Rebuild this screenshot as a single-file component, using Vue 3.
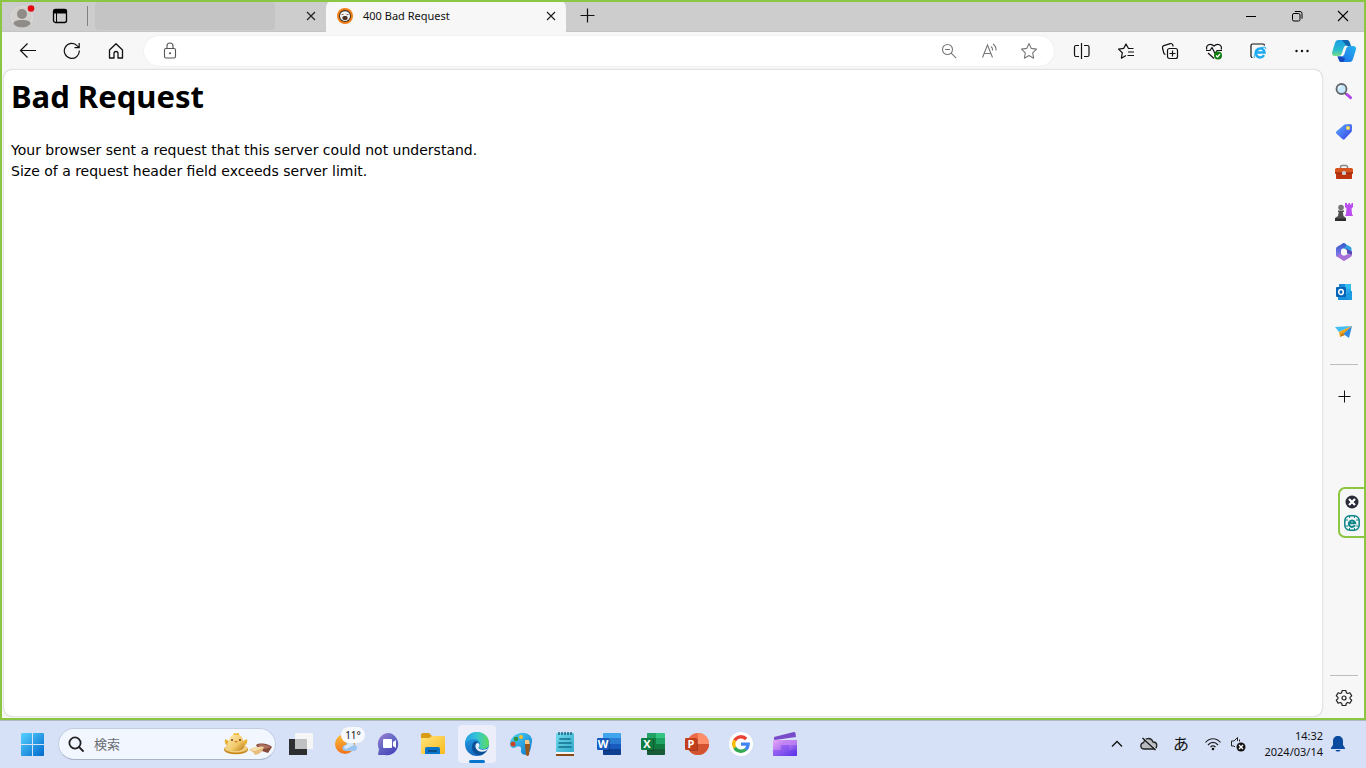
<script setup>
import { ref } from 'vue'

const address = ref('')
const query = ref('')
const apps = [
  { name: 'Word', letter: 'W', kind: 'word', c: ['#41a5ee', '#2b7cd3', '#185abd', '#103f91'], tile: '#185abd' },
  { name: 'Excel', letter: 'X', kind: 'excel', c: ['#33c481', '#21a366', '#107c41', '#185c37'], tile: '#107c41' }
]
</script>

<template>
  <div class="desktop">
    <section class="window" aria-label="Browser">
      <header class="titlebar">
        <button class="profile" aria-label="Profile">
          <svg width="26" height="26" viewBox="0 0 26 26">
            <circle cx="13" cy="14" r="10.5" fill="#d2d0cd" stroke="#dedbd6" />
            <circle cx="13" cy="11" r="5" fill="#8f8b87" />
            <path d="M4.500 21c0-3 3-4 8.500-4s8.500 1 8.500 4c-2.500 2.500-5 3.500-8.500 3.500S7 23.500 4.500 21z" fill="#8f8b87" />
            <circle cx="22" cy="5.500" r="3.300" fill="#e50914" />
          </svg>
        </button>
        <button class="workspaces" aria-label="Tab actions">
          <svg width="16" height="16" viewBox="0 0 16 16" fill="none" stroke="#000">
            <rect x="1.500" y="1.500" width="13" height="13" rx="2" stroke-width="1.300" />
            <path d="M1.500 3.500h13" stroke-width="4" />
            <path d="M4.500 4v10.500" />
          </svg>
        </button>
        <span class="tab-divider"></span>
        <div class="tab idle-tab">
          <button class="tab-label blank" aria-label="Background tab"></button>
          <button class="close" aria-label="Close background tab">
            <svg width="10" height="10" viewBox="0 0 10 10"><path d="M1 1l8 8M9 1L1 9" stroke="#222" stroke-width="1.200" /></svg>
          </button>
        </div>
        <div class="tab active-tab">
          <button class="tab-label">
            <svg width="16" height="16" viewBox="0 0 16 16">
              <circle cx="8" cy="8" r="8" fill="#f07d15" />
              <circle cx="8" cy="8" r="6" fill="#38312d" />
              <path d="M3 7.500C3.500 4.500 5.500 3.200 8 3.200s4.500 1.300 5 4.300c.2 3-2 5.500-5 5.500s-5.200-2.500-5-5.500z" fill="#f4f2f0" />
              <path d="M4.500 6.500h2M9.500 6.500h2" stroke="#777" />
              <path d="M5.500 9c.8-1.200 4.200-1.200 5 0v2c-.8 1.500-4.200 1.500-5 0z" fill="#4a3024" />
            </svg>
            <span>400 Bad Request</span>
          </button>
          <button class="close" aria-label="Close tab">
            <svg width="10" height="10" viewBox="0 0 10 10"><path d="M1 1l8 8M9 1L1 9" stroke="#222" stroke-width="1.200" /></svg>
          </button>
        </div>
        <button class="new-tab" aria-label="New tab">
          <svg width="15" height="15" viewBox="0 0 15 15"><path d="M7.500 0.500v14M.5 7.500h14" stroke="#111" stroke-width="1.200" /></svg>
        </button>
        <div class="window-controls">
          <button aria-label="Minimize"><svg width="12" height="12" viewBox="0 0 12 12"><path d="M1 6.500h10" stroke="#000" /></svg></button>
          <button aria-label="Restore">
            <svg width="12" height="12" viewBox="0 0 12 12" fill="none" stroke="#000">
              <rect x="1.500" y="3.500" width="7.500" height="7.500" rx="1.500" /><path d="M3.800 1.500H9a2 2 0 0 1 2 2v5.200" />
            </svg>
          </button>
          <button aria-label="Close"><svg width="12" height="12" viewBox="0 0 12 12"><path d="M1 1l10 10M11 1L1 11" stroke="#000" stroke-width="1.100" /></svg></button>
        </div>
      </header>

      <nav class="toolbar" aria-label="Browser toolbar">
        <div class="group">
          <button aria-label="Back">
            <svg width="18" height="18" viewBox="0 0 18 18" fill="none" stroke="#111" stroke-width="1.200"><path d="M17 8.500H1.500M8.500 1.500l-7 7 7 7" /></svg>
          </button>
          <button aria-label="Refresh">
            <svg width="18" height="18" viewBox="0 0 18 18" fill="none" stroke="#111" stroke-width="1.200"><path d="M16.300 8.500a7.500 7.500 0 1 1-2-4.700l1.800 1.800M16.200 1v4.700h-4.700" /></svg>
          </button>
          <button aria-label="Home">
            <svg width="18" height="18" viewBox="0 0 18 18" fill="none" stroke="#111" stroke-width="1.300" stroke-linejoin="round"><path d="M2.500 8L9 1.800 15.500 8v8H11v-4.500a2 2 0 0 0-4 0V16H2.500z" /></svg>
          </button>
        </div>
        <div class="address">
          <button class="lock" aria-label="Site information">
            <svg width="16" height="18" viewBox="0 0 16 18" fill="none" stroke="#555" stroke-width="1.100">
              <rect x="2.500" y="6.500" width="11" height="9.500" rx="1.500" /><path d="M5 6.500V4a3 3 0 0 1 6 0v2.500" /><circle cx="8" cy="11.300" r="1" fill="#444" stroke="none" />
            </svg>
          </button>
          <input v-model="address" type="text" aria-label="Address" />
          <button aria-label="Zoom">
            <svg width="18" height="18" viewBox="0 0 18 18" fill="none" stroke="#777" stroke-width="1.100"><circle cx="7.500" cy="7.500" r="5" /><path d="M11.200 11.200l5 5M5 7.500h5" /></svg>
          </button>
          <button aria-label="Read aloud">
            <svg width="18" height="18" viewBox="0 0 18 18" fill="none" stroke="#777" stroke-width="1.100"><path d="M2.500 15.500L7.500 3l5 12.500M4.300 11.500h6.400M11 4.500a4 4 0 0 1 1.500 4M13 2a7 7 0 0 1 3 6.500" /></svg>
          </button>
          <button aria-label="Add to favorites">
            <svg width="18" height="18" viewBox="0 0 18 18" fill="none" stroke="#777" stroke-width="1.100" stroke-linejoin="round"><path d="M9 1.500l2.300 4.900 5.200.7-3.800 3.700.9 5.400L9 13.600l-4.600 2.600.9-5.400-3.800-3.700 5.200-.7z" /></svg>
          </button>
        </div>
        <div class="group">
          <button aria-label="Split screen">
            <svg width="18" height="18" viewBox="0 0 18 18" fill="none" stroke="#111" stroke-width="1.200"><path d="M8.500 1v16M6 3.500H3a1.500 1.500 0 0 0-1.500 1.500v8a1.500 1.500 0 0 0 1.500 1.500h3M11 3.500h3.500A1.500 1.500 0 0 1 16 5v8a1.500 1.500 0 0 1-1.500 1.500H11" /></svg>
          </button>
          <button aria-label="Favorites">
            <svg width="18" height="18" viewBox="0 0 18 18" fill="none" stroke="#111" stroke-width="1.200" stroke-linejoin="round"><path d="M16.500 6.500h-5L9 2 6.700 6.400l-5.200.7 3.800 3.700-.9 5.400L9 13.500M11 10h6M10.500 13.500H17" /></svg>
          </button>
          <button aria-label="Collections">
            <svg width="18" height="18" viewBox="0 0 18 18" fill="none" stroke="#111" stroke-width="1.200"><rect x="6.500" y="6.500" width="10" height="10" rx="2" /><path d="M11.500 8.500v6M8.500 11.500h6M4.500 12.500a2 2 0 0 1-1.700-1.500L1.500 6a2 2 0 0 1 1.300-2.400l6.500-2a2 2 0 0 1 2.400 1.200l.5 1.700" /></svg>
          </button>
          <button aria-label="Browser essentials">
            <svg width="18" height="18" viewBox="0 0 18 18" fill="none" stroke="#111" stroke-width="1.200" stroke-linejoin="round"><path d="M1.800 7.500C.5 3 5.500.5 9 4c3.500-3.500 8.500-1 7.200 3.500M1 8.500h4l2-3 3 6 2-3h5M3 11l6 5.500" /><circle cx="13" cy="13.500" r="4" fill="#107c10" stroke="none" /><path d="M11 13.500l1.500 1.500 2.500-3" stroke="#fff" /></svg>
          </button>
          <button aria-label="Internet Explorer mode">
            <svg width="18" height="18" viewBox="0 0 18 18" fill="none"><path d="M3.500 15.500A1.500 1.500 0 0 1 2 14V3.500A1.500 1.500 0 0 1 3.500 2H14a1.500 1.500 0 0 1 1.500 1.500" stroke="#111" stroke-width="1.200" /><path d="M15 13.200a4.500 4.500 0 1 1 .6-2.700H7" stroke="#1eaaf1" stroke-width="2.400" /><path d="M5.500 16c-2-2 4-10.500 9.500-11 1.500 0 2 .8 1.400 2" stroke="#1eaaf1" /></svg>
          </button>
          <button aria-label="Settings and more">
            <svg width="18" height="18" viewBox="0 0 18 18" fill="#111"><circle cx="3.500" cy="9" r="1.200" /><circle cx="9" cy="9" r="1.200" /><circle cx="14.500" cy="9" r="1.200" /></svg>
          </button>
        </div>
        <button class="copilot" aria-label="Copilot">
          <svg width="24" height="24" viewBox="0 0 24 24">
            <defs>
              <linearGradient id="cpa" x1="0" y1="0" x2="0" y2="1"><stop stop-color="#1b9de5" /><stop offset=".6" stop-color="#28b9d0" /><stop offset="1" stop-color="#75de89" /></linearGradient>
              <linearGradient id="cpb" x1="0" y1="1" x2="1" y2="0"><stop stop-color="#1a6ae8" /><stop offset="1" stop-color="#28b3f0" /></linearGradient>
            </defs>
            <path d="M6.500 1H16l2.500 5.500H15c-2 0-3 1-3.600 3L10 14c-.6 2-1.800 3-3.500 3H3c-2.500 0-3.500-1.500-2.800-4L3 4c.5-2 1.500-3 3.500-3z" fill="url(#cpa)" />
            <path d="M17.500 23H8l-2.500-5.500H9c2 0 3-1 3.600-3L14 10c.6-2 1.800-3 3.500-3H21c2.500 0 3.500 1.500 2.800 4L21 20c-.5 2-1.500 3-3.500 3z" fill="url(#cpb)" />
            <path d="M10 1h4.500c2 0 3 1 3.500 3l1 3h-4l-2-2z" fill="#1267b1" />
            <path d="M5.500 17.500H9l4 2L11.500 23H10c-2 0-3-1-3.500-3z" fill="#1649bd" />
          </svg>
        </button>
      </nav>

      <div class="workspace">
        <main class="page">
          <h1>Bad Request</h1>
          <p>Your browser sent a request that this server could not understand.<br />Size of a request header field exceeds server limit.</p>
        </main>
        <aside class="sidebar" aria-label="Sidebar">
          <button aria-label="Search">
            <svg width="18" height="18" viewBox="0 0 18 18"><path d="M10 10l2 2" stroke="#555" stroke-width="2" /><path d="M12 11.500l3.500 3.200" stroke="#b445e8" stroke-width="3" stroke-linecap="round" /><circle cx="6.500" cy="6" r="5" fill="#c8e9fb" stroke="#62666a" stroke-width="1.800" /><path d="M3.500 5.500a3.500 3.500 0 0 1 2.500-2.800" stroke="#fff" fill="none" /></svg>
          </button>
          <button aria-label="Shopping">
            <svg width="18" height="18" viewBox="0 0 18 18"><defs><linearGradient id="tag" x1="0" y1="0" x2="1" y2="1"><stop stop-color="#57adff" /><stop offset="1" stop-color="#393ee7" /></linearGradient></defs><path d="M9.500 1.500L15 1c1.300 0 2 .8 2 2l-.2 5.500-7 7.500c-.8.800-1.700.8-2.500 0L1.600 10.700c-.8-.8-.8-1.700 0-2.500z" fill="url(#tag)" /><circle cx="13" cy="5" r="2" fill="#ffd44a" /><circle cx="13" cy="5" r=".8" fill="#fff3c0" /></svg>
          </button>
          <button aria-label="Tools">
            <svg width="18" height="18" viewBox="0 0 18 18"><path d="M5.500 6V4A1.500 1.500 0 0 1 7 2.500h4A1.500 1.500 0 0 1 12.500 4v2" fill="none" stroke="#83898d" stroke-width="1.500" /><rect y="5" width="18" height="6" rx="1.500" fill="#d8541f" /><path d="M1 10h16v5c0 .7-.4 1-1 1H2c-.6 0-1-.3-1-1z" fill="#bd3510" /><path d="M0 10h18" stroke="#8c2308" /><rect x="7" y="8" width="4" height="4" rx="1.500" fill="#c8d0d5" /></svg>
          </button>
          <button aria-label="Games">
            <svg width="18" height="18" viewBox="0 0 18 18"><path d="M10 0h2v1.500h1.500V0h1.500v1.500h1.500V0H18v4l-1.500 1.500.5 5.500 1 2h-8l1-2 .5-5.500L10 4z" fill="#b94df0" /><circle cx="6" cy="4.500" r="2.800" fill="#777" /><path d="M3 7.500h6v1.500H7.800l.7 4 2.500 2v3H0v-3l3-2 .7-4H3z" fill="#505050" /><path d="M0 15.500h11V18H0z" fill="#2d2d2d" /></svg>
          </button>
          <button aria-label="Microsoft 365">
            <svg width="18" height="18" viewBox="0 0 18 18"><defs><linearGradient id="m365" x1="0" y1="0" x2="0" y2="1"><stop stop-color="#345ac9" /><stop offset="1" stop-color="#8a7bed" /></linearGradient></defs><path d="M8.500 0l6.500 3.500c1 .6 1.500 1.500 1.500 2.500v6l-5-2V7L5 4z" fill="#35a0df" /><path d="M8.500 0L2.200 3.700C1.300 4.300 1 5 1 6v6c0 1 .5 1.700 1.300 2l3.700-.5V7.800c0-1 .4-1.600 1.200-2.100L11 4V1z" fill="url(#m365)" /><path d="M2 13.500l6 4c.7.500 1.300.5 2 0l6-3.700c.7-.5 1-1.200 1-2V9l-6.500 3.200c-1 .6-2 .6-3 0L5 10z" fill="#a670d6" /><path d="M11 5.500l6 3v3L11 10z" fill="#5949b5" /><path d="M9 5.500l3 1.700v3.300L9 12.200l-3-1.700V7.200z" fill="#f7f7f7" /></svg>
          </button>
          <button aria-label="Outlook">
            <svg width="18" height="18" viewBox="0 0 18 18"><path d="M4 1h12v9H4z" fill="#28a8ea" /><path d="M4 1h6v5H4z" fill="#1a87d7" /><path d="M10 1h6v5h-6z" fill="#32bdf0" /><path d="M3 8l7 3 7-3v8c0 .7-.3 1-1 1H4c-.7 0-1-.3-1-1z" fill="#1490df" /><path d="M17 8l-7 5 5 4h1c.7 0 1-.3 1-1z" fill="#1c9de3" /><rect x="1" y="4" width="10" height="10" rx="1" fill="#0364b8" /><ellipse cx="6" cy="9" rx="2.300" ry="2.600" fill="none" stroke="#fff" stroke-width="1.500" /></svg>
          </button>
          <button aria-label="Drop">
            <svg width="18" height="18" viewBox="0 0 18 18"><path d="M0 4l17-1-13 6z" fill="#43bdf2" /><path d="M17 3L7 10l7 5z" fill="#2f8bea" /><path d="M17 3L4 9l1 5z" fill="#f2a51c" /><path d="M5 14l2-4 3 2z" fill="#bf7412" /></svg>
          </button>
          <span class="rule"></span>
          <button class="plus" aria-label="Customize">
            <svg width="13" height="13" viewBox="0 0 13 13"><path d="M6.500 .5v12M.5 6.500h12" stroke="#111" /></svg>
          </button>
          <span class="rule bottom"></span>
          <button class="settings" aria-label="Settings">
            <svg width="18" height="18" viewBox="0 0 18 18" fill="none" stroke="#222" stroke-width="1.200" stroke-linejoin="round"><path d="M7.200 1.500h3.600l.5 2.200 1.400.8 2.200-.7 1.800 3.100-1.700 1.500v1.200l1.700 1.500-1.800 3.100-2.200-.7-1.400.8-.5 2.200H7.200l-.5-2.200-1.400-.8-2.200.7-1.800-3.100L3 9.600V8.400L1.300 6.900l1.800-3.100 2.200.7 1.400-.8z" /><circle cx="9" cy="9" r="2" /></svg>
          </button>
        </aside>
      </div>

      <div class="edge-panel">
        <button aria-label="Close panel"><svg width="14" height="14" viewBox="0 0 14 14"><circle cx="7" cy="7" r="6.500" fill="#292b38" /><path d="M4 4l6 6M10 4l-6 6" stroke="#fff" stroke-width="2.200" /></svg></button>
        <button aria-label="Web protection"><svg width="16" height="16" viewBox="0 0 16 16" fill="none" stroke="#0b8488"><rect x=".8" y=".8" width="14.400" height="14.400" rx="5" stroke-width="1.500" /><path d="M1 5h3M1 11h3M12 5h3M12 11h3M5.500 1v2M10.500 1v2M5.500 13v2M10.500 13v2" /><path d="M10.800 10.300a3.200 3.200 0 1 1 .4-2.100H6" stroke-width="2" /></svg></button>
      </div>
    </section>

    <footer class="taskbar">
      <button class="task" aria-label="Start">
        <svg width="23" height="23" viewBox="0 0 23 23"><defs><linearGradient id="win" x1="0" y1="0" x2="1" y2="1"><stop stop-color="#56d2ff" /><stop offset="1" stop-color="#0069cc" /></linearGradient></defs><path d="M0 1q0-1 1-1h10v11H0zM12 0h10q1 0 1 1v10H12zM0 12h11v11H1q-1 0-1-1zM12 12h11v10q0 1-1 1H12z" fill="url(#win)" /></svg>
      </button>
      <label class="search">
        <svg width="16" height="16" viewBox="0 0 16 16" fill="none" stroke="#222" stroke-width="1.800"><circle cx="7" cy="7" r="5.600" /><path d="M11 11l4 4" stroke-linecap="round" /></svg>
        <input v-model="query" type="text" placeholder="検索" aria-label="検索" />
        <svg width="50" height="24" viewBox="0 0 50 24">
          <defs><linearGradient id="chick" x1="0" y1="0" x2="1" y2="1"><stop stop-color="#fff0bd" /><stop offset=".6" stop-color="#f0c765" /><stop offset="1" stop-color="#b97a16" /></linearGradient></defs>
          <ellipse cx="13" cy="17.500" rx="12" ry="4.800" fill="#c88a1d" /><ellipse cx="13" cy="16.500" rx="11.500" ry="4" fill="#f0cf80" />
          <path d="M2 7l4 2v5c-3 0-5-3-4-7zM24 7l-4 2v5c3 0 5-3 4-7z" fill="#e9b43c" />
          <path d="M13 2c5 0 7 4 7 7 3 4 2 10-7 10S3 13 6 9c0-4 3-7 7-7z" fill="url(#chick)" />
          <path d="M11 3c-1-2 1-3 2-1 1-2 4-1 3 1z" fill="#efb42b" /><circle cx="9" cy="8" r="1" fill="#6b3c17" /><circle cx="17" cy="8" r="1" fill="#6b3c17" /><path d="M11 9h4l-2 2z" fill="#e1822b" />
          <path d="M33 13c4-3 13-1 16 2l-4 6-9-3z" fill="#874a3a" /><path d="M34 13c4-2 11 0 14 2l-6 2z" fill="#ad7261" /><path d="M26 18c3-3 10-4 15-3-1 4-4 7-9 8l-2-3z" fill="#e7be80" /><path d="M26 18c3-2 10-4 15-3l-9 4z" fill="#f7dfac" />
        </svg>
      </label>
      <button class="task" aria-label="Task view">
        <svg width="24" height="24" viewBox="0 0 24 24"><path d="M0 7h18v16H0z" fill="#2d2e2f" /><path d="M6 1h18v16H6z" fill="#f5f5f5" /><path d="M6 7h12v10H6z" fill="#bfc0c2" /></svg>
      </button>
      <button class="task weather" aria-label="Weather 11°">
        <svg width="26" height="24" viewBox="0 0 26 24"><defs><linearGradient id="sun" x1="0" y1="0" x2="0" y2="1"><stop stop-color="#fbbd3a" /><stop offset="1" stop-color="#f17319" /></linearGradient></defs><circle cx="13" cy="12" r="10" fill="url(#sun)" /><path d="M14 19c-5 0-5-6 0-6 1-6 8-5 8 0 4 0 4 6 0 6z" fill="#9cc4f1" /><path d="M14 17c-3-1-2-4 1-4 1-5 6-4 7 0" fill="#d6e9fa" /></svg>
        <span class="badge">11°</span>
      </button>
      <button class="task" aria-label="Chat">
        <svg width="24" height="24" viewBox="0 0 24 24"><defs><linearGradient id="chat" x1="0" y1="0" x2=".7" y2="1"><stop stop-color="#a481d3" /><stop offset=".5" stop-color="#6668c6" /><stop offset="1" stop-color="#4943b7" /></linearGradient></defs><path d="M12 1a11 11 0 1 1-4 22H2c-1 0-1-1-.7-2L2 17A11 11 0 0 1 12 1z" fill="url(#chat)" /><rect x="6" y="7" width="9" height="9" rx="1" fill="#fff" /><path d="M16 10l3-2v8l-3-2z" fill="#fff" /></svg>
      </button>
      <button class="task" aria-label="File Explorer">
        <svg width="24" height="24" viewBox="0 0 24 24"><defs><linearGradient id="folder" x1="0" y1="0" x2="1" y2="1"><stop stop-color="#ffe47d" /><stop offset="1" stop-color="#f9b91b" /></linearGradient></defs><path d="M0 3q0-2 2-2h6l3 3h11q2 0 2 2v6H0z" fill="#d99b13" /><path d="M0 6h8l3-2h11q2 0 2 2v15q0 1-1 1H0z" fill="url(#folder)" /><path d="M4 22v-5q0-2 2-2h11q2 0 2 2v5z" fill="#0875cb" /><path d="M7 19h9" stroke="#075188" stroke-width="2" /></svg>
      </button>
      <button class="task current" aria-label="Edge">
        <svg width="26" height="26" viewBox="0 0 26 26"><defs><linearGradient id="edt" x1="0" y1="0" x2="1" y2="0"><stop stop-color="#259ee3" /><stop offset=".5" stop-color="#36c6d6" /><stop offset="1" stop-color="#5ddd57" /></linearGradient><linearGradient id="edl" x1="0" y1="0" x2="0" y2="1"><stop stop-color="#29a9ed" /><stop offset="1" stop-color="#1167bd" /></linearGradient></defs>
          <circle cx="13" cy="13" r="12" fill="url(#edl)" /><path d="M1 12C2 4 8 1 13 1c7 0 12 5 12 11 0 4-3 6-6 6-3 0-5-1-4-2 3-3 0-8-5-8-4 0-7 2-9 4z" fill="url(#edt)" /><path d="M9 12c-3 6 1 13 8 12 3-1 5-3 7-6-4 3-12 3-12-3 0-2 1-3 2-4-2-1-4-1-5 1z" fill="#0b4f96" /><path d="M13 12c3 0 3 3 1.500 4.200-.7 1.200 2 2.600 4.500 2.600 3 0 5-1.300 5.500-2.300-1 3-3 4.300-6.500 4.300-6 0-8.500-6.500-5-8.800z" fill="#e9eef8" />
        </svg>
      </button>
      <button class="task" aria-label="Paint">
        <svg width="24" height="24" viewBox="0 0 24 24"><defs><linearGradient id="paint" x1="0" y1="0" x2="1" y2="1"><stop stop-color="#54d6f4" /><stop offset="1" stop-color="#0876cf" /></linearGradient></defs><path d="M12 1c7-1 12 4 11 9-1 4-1 9-4 12-3 2-8 0-7-4 1-3-2-5-5-3-2 2-6 1-6-3 0-6 5-10 11-11z" fill="url(#paint)" /><circle cx="4" cy="12" r="2.500" fill="#c74825" /><circle cx="7" cy="7" r="2.300" fill="#31933c" /><circle cx="12" cy="5" r="2" fill="#f5be2d" /><path d="M16 8h4l1 5h-5z" fill="#f8c887" /><path d="M16 12h5l-1 11q-1.500 2-3 0z" fill="#99561b" /></svg>
      </button>
      <button class="task" aria-label="Notepad">
        <svg width="18" height="24" viewBox="0 0 18 24"><path d="M0 22h18v2H0z" fill="#894912" /><path d="M0 20h18v2H0z" fill="#f4f4f4" /><defs><linearGradient id="note" x1="0" y1="0" x2="1" y2="1"><stop stop-color="#75dced" /><stop offset="1" stop-color="#31a9c9" /></linearGradient></defs><rect y="1" width="18" height="19" rx="1" fill="url(#note)" /><path d="M3 0v3M6 0v3M9 0v3M12 0v3M15 0v3" stroke="#176785" stroke-width="1.500" /><path d="M4 7h10M3 11h12M3 15h12" stroke="#117090" stroke-width="1.700" stroke-linecap="round" /></svg>
      </button>
      <button v-for="app in apps" :key="app.kind" class="task" :aria-label="app.name">
        <svg width="24" height="22" viewBox="0 0 24 22">
          <rect x="6" width="18" height="22" rx="1" :fill="app.c[0]" />
          <path d="M6 5h18v6H6z" :fill="app.c[1]" /><path d="M6 11h18v6H6z" :fill="app.c[2]" /><path d="M6 16h18v5q0 1-1 1H7q-1 0-1-1z" :fill="app.c[3]" />
          <path v-if="app.kind === 'excel'" d="M6 1q0-1 1-1h8v5H6z" fill="#21a366" /><path v-if="app.kind === 'excel'" d="M6 5h9v6H6z" fill="#107c41" />
          <path d="M6 6h6q1 0 1 1v10q0 1-1 1H6z" fill="#000" opacity=".25" />
          <rect y="5" width="12" height="12" rx="1" :fill="app.tile" />
          <text x="6" y="15" text-anchor="middle" fill="#fff" class="letter">{{ app.letter }}</text>
        </svg>
      </button>
      <button class="task" aria-label="PowerPoint">
        <svg width="24" height="22" viewBox="0 0 24 22"><circle cx="13" cy="11" r="11" fill="#ed6c47" /><path d="M13 0a11 11 0 0 1 11 11H13z" fill="#ff8f6b" /><path d="M2 11h22a11 11 0 0 1-22 0z" fill="#d35230" /><path d="M4 6h8q1 0 1 1v10q0 1-1 1H4z" opacity=".25" /><rect y="5" width="12" height="12" rx="1" fill="#c43e1c" /><text x="6" y="15" text-anchor="middle" fill="#fff" class="letter">P</text></svg>
      </button>
      <button class="task" aria-label="Google">
        <svg width="24" height="24" viewBox="0 0 24 24" fill="none" stroke-width="3.300"><circle cx="12" cy="12" r="12" fill="#fff" /><path d="M5.700 8.400A7.200 7.200 0 0 1 17.200 7" stroke="#ea4335" /><path d="M5.700 15.600a7.200 7.200 0 0 1 0-7.200" stroke="#fbbc05" /><path d="M16.800 17.400a7.200 7.200 0 0 1-11.100-1.800" stroke="#34a853" /><path d="M12 12.200h7.200a7.200 7.200 0 0 1-2.400 5.200" stroke="#4285f4" /></svg>
      </button>
      <button class="task" aria-label="Clipchamp">
        <svg width="24" height="24" viewBox="0 0 24 24"><defs><linearGradient id="clip" x1="0" y1="0" x2="1" y2="1"><stop stop-color="#e9a5fa" /><stop offset=".5" stop-color="#aa71ef" /><stop offset="1" stop-color="#4f2be5" /></linearGradient></defs><path d="M1 5L21 0q1 0 1.500 1l.5 4L2 8q-1 0-1-1z" fill="#7a4bc8" /><path d="M0 8h24v15q0 1-1 1H1q-1 0-1-1z" fill="url(#clip)" /><path d="M8 13h16V8h-8z" fill="#c587f5" opacity=".7" /><path d="M0 18h8v-5h8v5h8v5q0 1-1 1H1q-1 0-1-1z" fill="#643df0" opacity=".4" /></svg>
      </button>
      <div class="tray">
        <button aria-label="Show hidden icons"><svg width="12" height="12" viewBox="0 0 12 12" fill="none" stroke="#111" stroke-width="1.300"><path d="M1 8.500l5-5 5 5" /></svg></button>
        <button aria-label="OneDrive"><svg width="18" height="16" viewBox="0 0 18 16"><path d="M4.500 13c-5 0-4.500-6-.8-6.300C4.500 1 11.500 1.500 13 6c5 0 5 7 0 7z" fill="#b9bbbf" stroke="#222" stroke-width="1.300" /><path d="M3.500 2l13 12" stroke="#d9e3f7" stroke-width="1.300" /><path d="M2.500 2l13 12" stroke="#111" stroke-width="1.300" /></svg></button>
        <button class="ime" aria-label="Input mode">あ</button>
        <button aria-label="Network"><svg width="18" height="14" viewBox="0 0 18 14" fill="none" stroke="#222" stroke-width="1.200"><path d="M1.500 5.500c4-5 11-5 15 0M4 8c3-3.500 7-3.500 10 0M6.500 10.200c1.500-1.700 3.500-1.700 5 0" /><circle cx="9" cy="12" r="1.300" fill="#111" stroke="none" /></svg></button>
        <button class="volume" aria-label="Muted"><svg width="16" height="16" viewBox="0 0 16 16" fill="none" stroke="#222"><path d="M7.500 5V1.500L4 5H1.500v5H4l1 1M9.500 3.500v2" /><circle cx="11" cy="11" r="4.500" fill="#111" stroke="none" /><path d="M9 9l4 4M13 9l-4 4" stroke="#fff" stroke-width="1.400" /></svg></button>
        <button class="clock"><time>14:32</time><time>2024/03/14</time></button>
        <button class="bell" aria-label="Notifications"><svg width="14" height="16" viewBox="0 0 14 16" fill="#0a4ba0"><path d="M7 0c3 0 5 2 5 5v4l2 3v1H0v-1l2-3V5c0-3 2-5 5-5zM4.500 14h5c-.5 2-4.500 2-5 0z" /></svg></button>
      </div>
    </footer>
  </div>
</template>

<style>
body { margin: 0; }
</style>

<style scoped>
* { box-sizing: border-box; }
.desktop { min-height: 100vh; display: flex; flex-direction: column; font-family: "Noto Sans", "Noto Sans CJK JP", sans-serif; color: #111; }
button { border: 0; padding: 0; margin: 0; background: none; font: inherit; color: inherit; display: flex; align-items: center; justify-content: center; flex: none; }
input { border: 0; outline: 0; background: none; padding: 0; min-width: 0; flex: 1; font: inherit; }
svg { display: block; flex: none; }
.window { position: relative; flex: 1; display: flex; flex-direction: column; background: #f7f7f7; }
.window::after { content: ""; position: absolute; inset: 0; border: 2px solid #8cc541; pointer-events: none; }
.titlebar { height: 32px; display: flex; background: #cdcdcd; border-bottom: 1px solid #c4c4c4; }
.profile { width: 44px; }
.workspaces { width: 32px; }
.tab-divider { width: 1px; height: 20px; margin: 6px 0 0 11px; background: #808080; }
.tab { display: flex; align-items: center; height: 32px; font-size: 11px; }
.idle-tab { width: 238px; }
.tab-label { flex: 1; height: 30px; justify-content: flex-start; gap: 10px; }
.tab-label span { padding-bottom: 1px; }
.blank { background: #c4c4c4; margin: 0 21px 0 7px; height: 28px; border-radius: 4px; }
.close { width: 30px; height: 100%; }
.active-tab { width: 240px; padding-left: 11px; background: #f7f7f7; border-radius: 8px 8px 0 0; }
.new-tab { width: 42px; }
.window-controls { margin-left: auto; display: flex; }
.window-controls button { width: 46px; }
.toolbar { height: 38px; display: flex; align-items: center; padding-left: 6px; }
.group { display: flex; }
.group button { width: 44px; height: 38px; }
.address { flex: 1; display: flex; align-items: center; height: 30px; margin: 0 6px; padding: 0 5px 0 6px; border-radius: 15px; background: #fff; box-shadow: 0 0 2px #e4e4e4; font-size: 14px; }
.address button { width: 40px; height: 30px; }
.copilot { width: 40px; height: 38px; margin-right: 2px; }
.workspace { flex: 1; display: flex; }
.page { flex: 1; margin: 0 0 4px 4px; padding: 5px 7px; background: #fff; border-radius: 8px; box-shadow: 0 0 2px #aaa; color: #000; }
h1 { margin: 0; font-size: 31px; line-height: 42px; font-weight: 700; }
p { margin: 23px 0 0; font-family: "DejaVu Sans", sans-serif; font-size: 14px; line-height: 21px; }
.sidebar { width: 44px; display: flex; flex-direction: column; align-items: center; padding: 2px 0 0; }
.sidebar button { width: 40px; height: 40px; }
.rule { width: 28px; height: 1px; background: #bdbdbd; margin-top: 12px; flex: none; }
.sidebar .plus { height: 40px; margin-top: 11px; }
.rule.bottom { margin-top: auto; }
.sidebar .settings { height: 44px; }
.edge-panel { position: absolute; right: 0; top: 487px; width: 28px; height: 51px; display: flex; flex-direction: column; align-items: center; gap: 6px; padding: 6px 2px 0 0; border: 2px solid #8cc541; border-right: 0; border-radius: 7px 0 0 7px; background: #f7f7f7; }
.taskbar { height: 48px; display: flex; align-items: center; padding: 0 21px 1px 10px; background: #d6e0f7; border-top: 1px solid #b1b8c4; }
.task { width: 44px; height: 38px; position: relative; }
.search { display: flex; align-items: center; width: 218px; height: 32px; margin: 0 3px 0 4px; padding: 0 2px 0 9px; gap: 10px; border: 1px solid #c3cde2; border-bottom-color: #a9b4ca; border-radius: 16px; background: #f2f6fe; font-size: 13px; }
.search input::placeholder { color: #6a6d74; opacity: 1; }
.badge { position: absolute; top: 2px; left: 18px; width: 24px; height: 16px; border-radius: 8px; background: #f8f9fc; font-size: 10px; line-height: 16px; }
.current { width: 38px; margin: 0 3px; background: #eceff9; border-radius: 4px; }
.current::after { content: ""; position: absolute; bottom: 0; left: 11px; width: 16px; height: 3px; border-radius: 2px; background: #0574cd; }
.letter { font: 700 11px "Open Sans", sans-serif; }
.tray { margin-left: auto; display: flex; align-items: center; }
.tray button { width: 32px; height: 38px; }
.tray .ime { font-family: "Noto Sans CJK JP", sans-serif; font-size: 16px; padding-bottom: 2px; }
.tray .volume { width: 18px; }
.tray .clock { width: 76px; flex-direction: column; align-items: flex-end; font-size: 11px; line-height: 16px; }
.tray .bell { width: 14px; margin-left: 8px; }
</style>
